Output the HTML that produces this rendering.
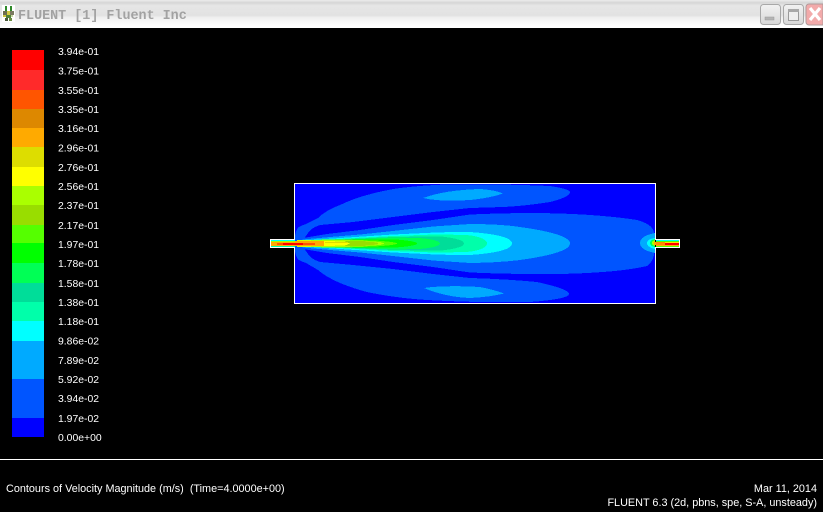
<!DOCTYPE html>
<html><head><meta charset="utf-8"><title>FLUENT</title>
<style>
html,body{margin:0;padding:0;background:#000;width:823px;height:512px;overflow:hidden}
svg{display:block;position:absolute;left:0;top:0}
text{font-family:"Liberation Sans",sans-serif;fill:#fff}
.l{font-size:10.4px}
.b{font-size:10.85px}
</style></head><body>
<svg width="823" height="512" viewBox="0 0 823 512" xmlns="http://www.w3.org/2000/svg">
<defs>
<linearGradient id="tb" x1="0" y1="0" x2="0" y2="1">
<stop offset="0" stop-color="#ececec"/><stop offset=".1" stop-color="#d6d6d6"/><stop offset=".2" stop-color="#e6e6e6"/><stop offset=".55" stop-color="#e2e2e2"/><stop offset=".62" stop-color="#efefef"/><stop offset=".85" stop-color="#fbfbfb"/><stop offset="1" stop-color="#ffffff"/>
</linearGradient>
<linearGradient id="bt" x1="0" y1="0" x2="0" y2="1"><stop offset="0" stop-color="#f2f2f2"/><stop offset="1" stop-color="#d8d8d8"/></linearGradient>
</defs>
<rect width="823" height="512" fill="#000"/>
<rect width="823" height="28" fill="url(#tb)"/>
<!-- app icon -->
<g shape-rendering="crispEdges">
<rect x="2" y="5" width="13" height="17" fill="#fff"/>
<rect x="5" y="6" width="2" height="5" fill="#2f8a2a"/><rect x="10" y="6" width="2" height="5" fill="#2f8a2a"/>
<rect x="3" y="11" width="4" height="4" fill="#6c6c50"/><rect x="7" y="11" width="3" height="4" fill="#d0c840"/><rect x="10" y="11" width="4" height="4" fill="#7a7a60"/>
<rect x="3" y="15" width="3" height="2" fill="#c8c040"/><rect x="6" y="15" width="5" height="3" fill="#50803a"/><rect x="11" y="15" width="2" height="2" fill="#c8d8a0"/>
<rect x="5" y="18" width="3" height="3" fill="#4a5a3a"/><rect x="9" y="18" width="3" height="3" fill="#6a8a40"/>
</g>
<text x="18" y="19" style="font-family:'Liberation Mono',monospace;font-weight:bold;font-size:13.4px;fill:#a2a2a2">FLUENT [1] Fluent Inc</text>
<!-- window buttons -->
<rect x="760.5" y="4.5" width="20" height="20" rx="3" fill="url(#bt)" stroke="#a8a8a8"/>
<rect x="765" y="17" width="9" height="3" fill="#b4b4b4" stroke="#9a9a9a" stroke-width=".5"/>
<rect x="783.5" y="4.5" width="20" height="20" rx="3" fill="url(#bt)" stroke="#a8a8a8"/>
<rect x="788.5" y="9.5" width="10" height="11" fill="#eee" stroke="#9a9a9a"/><rect x="788" y="9" width="11" height="3" fill="#a8a8a8"/>
<path d="M806 7a3 3 0 0 1 3-3H823V25H809a3 3 0 0 1-3-3z" fill="#f2aaaa" stroke="#b09a9a"/>
<path d="M810 8L820 20M820 8L810 20" stroke="#fff" stroke-width="3.2" fill="none"/>

<!-- legend -->
<g shape-rendering="crispEdges">
<rect x="12" y="50" width="32" height="20" fill="#ff0000"/>
<rect x="12" y="70" width="32" height="20" fill="#ff2a2a"/>
<rect x="12" y="90" width="32" height="19" fill="#ff5500"/>
<rect x="12" y="109" width="32" height="19" fill="#dd8800"/>
<rect x="12" y="128" width="32" height="19" fill="#ffaa00"/>
<rect x="12" y="147" width="32" height="20" fill="#dddd00"/>
<rect x="12" y="167" width="32" height="19" fill="#ffff00"/>
<rect x="12" y="186" width="32" height="19" fill="#aaff00"/>
<rect x="12" y="205" width="32" height="20" fill="#99dd00"/>
<rect x="12" y="225" width="32" height="18" fill="#55ff00"/>
<rect x="12" y="243" width="32" height="20" fill="#00ff00"/>
<rect x="12" y="263" width="32" height="20" fill="#00ff55"/>
<rect x="12" y="283" width="32" height="19" fill="#00dd99"/>
<rect x="12" y="302" width="32" height="19" fill="#00ffaa"/>
<rect x="12" y="321" width="32" height="20" fill="#00ffff"/>
<rect x="12" y="341" width="32" height="38" fill="#00aaff"/>
<rect x="12" y="379" width="32" height="39" fill="#0055ff"/>
<rect x="12" y="418" width="32" height="19" fill="#0000ff"/>
</g>
<g>
<text class="l" x="58" y="55">3.94e-01</text>
<text class="l" x="58" y="74.500">3.75e-01</text>
<text class="l" x="58" y="94">3.55e-01</text>
<text class="l" x="58" y="113">3.35e-01</text>
<text class="l" x="58" y="132">3.16e-01</text>
<text class="l" x="58" y="151.500">2.96e-01</text>
<text class="l" x="58" y="171">2.76e-01</text>
<text class="l" x="58" y="190">2.56e-01</text>
<text class="l" x="58" y="209">2.37e-01</text>
<text class="l" x="58" y="229">2.17e-01</text>
<text class="l" x="58" y="248">1.97e-01</text>
<text class="l" x="58" y="267">1.78e-01</text>
<text class="l" x="58" y="287">1.58e-01</text>
<text class="l" x="58" y="306">1.38e-01</text>
<text class="l" x="58" y="325">1.18e-01</text>
<text class="l" x="58" y="344.500">9.86e-02</text>
<text class="l" x="58" y="364">7.89e-02</text>
<text class="l" x="58" y="383">5.92e-02</text>
<text class="l" x="58" y="402">3.94e-02</text>
<text class="l" x="58" y="422">1.97e-02</text>
<text class="l" x="58" y="441">0.00e+00</text>
</g>

<!-- domain -->
<g shape-rendering="crispEdges">
<rect x="295" y="184" width="360" height="119" fill="#0000ff"/>
<!-- top lobe -->
<path d="M295 243V236Q296 229 299 227Q303 225 306 224L318 218Q326 210 340 205Q355 198 367 195Q385 190 400 188Q425 185 447 184.500Q500 183.800 550 186Q570 189 570 192Q570 197 550 202Q525 206 503 207L470 208L433 212L393 217L353 222L320 225Q311 228 308 233Q304 239 300 243Z" fill="#0055ff"/>
<!-- bottom lobe -->
<path d="M295 243V251Q296 258 299 260Q303 262 306 263L318 270Q326 277 340 283Q355 289 367 292Q395 298 427 300Q480 303 530 302Q569 299 569 294Q569 289 537 282Q505 279 470 278L433 274L393 269L353 265L320 262Q311 259 308 254Q304 248 300 243Z" fill="#0055ff"/>
<!-- central 0055ff -->
<path d="M295 243L303 238L327 234L360 230L393 225L433 220L470 214.500Q505 213 537 213Q575 213.500 603 216Q625 218 637 220Q652 224 654 232L655 243L654 255Q652 263 647 266Q630 270 603 272Q570 274.500 537 274Q505 274 470 272.500L433 267L393 262L360 257L327 253L303 249Z" fill="#0055ff"/>
<!-- 00aaff -->
<path d="M423 198Q445 190 480 189Q495 190 503 193.500Q490 198 470 200Q440 202 423 198Z" fill="#00aaff"/>
<path d="M424 288Q445 285 480 287Q495 290 504 293.500Q490 297 470 298Q445 297 424 288Z" fill="#00aaff"/>
<path d="M296 243L303 239.500L330 237L360 234.500L393 231L433 226.500L470 224Q500 224 520 227Q570 234 570 243.500Q570 253 520 260Q495 263 470 263L433 260.500L393 256L360 252.500L330 250L303 247.500Z" fill="#00aaff"/>
<!-- 00ffff -->
<path d="M296 243L310 240L360 236.700L393 234.500L440 232.300L470 232Q512 235 512 243.500Q512 252 470 255L440 254.700L393 252.500L360 250.300L310 247Z" fill="#00ffff"/>
<!-- 00ffaa -->
<path d="M297 243L315 240.500L360 237.700L393 236L440 234.300L470 235.300Q487 238 487 243.500Q487 249 470 251.700L440 252.700L393 251L360 249.300L315 246.500Z" fill="#00ffaa"/>
<!-- 00dd99 -->
<path d="M297 243L320 240.500L360 238.500L393 237L440 236.300Q464 239 464 243.500Q464 248 440 250.700L393 250L360 248.500L320 246.500Z" fill="#00dd99"/>
<!-- 00ff55 -->
<path d="M297 243L320 240.500L360 239L393 237.500L420 238Q440 240 440 243.500Q440 247 420 249L393 249.500L360 248L320 246.500Z" fill="#00ff55"/>
<!-- 00ff00 -->
<path d="M297 243L325 240.500L360 239.500L393 239.300Q417 241 417 243.500Q417 246 393 247.700L360 247.500L325 246.500Z" fill="#00ff00"/>
<!-- 55ff00 -->
<path d="M297 240L345 239.500L375 240.500Q397 242 397 243.500Q397 245 375 246.500L345 247.500L297 247Z" fill="#55ff00"/>
<!-- aaff00 -->
<path d="M297 240L340 240L360 240.500L380 242L385 243.500L380 245L360 246.500L340 247L297 247Z" fill="#aaff00"/>
<!-- 99dd00 -->
<path d="M345 241L363 241L377 242.500L378 243.500L377 244.500L363 246L345 246Z" fill="#99dd00"/>
<!-- ffff00 -->
<path d="M297 240.500L325 241L345 241.500L350 243.500L345 245.500L325 246L297 246.500Z" fill="#ffff00"/>
<!-- dddd00 spot -->
<rect x="325" y="242" width="22" height="1" fill="#dddd00"/>
<!-- outlet blob -->
<path d="M655 233Q640 236 640 243Q640 250 655 253Z" fill="#00aaff"/>
<path d="M655 238Q647 239 647 243Q647 247 655 249Z" fill="#00ffff"/>
<path d="M655 239Q650 240 650 243Q650 246 655 247Z" fill="#00ff55"/>
<path d="M655 240Q652 241 652 243Q652 245 655 246Z" fill="#aaff00"/>
<rect x="654" y="242" width="2" height="3" fill="#ffaa00"/>

<!-- inlet -->
<rect x="271" y="240" width="24" height="1" fill="#00ffff"/>
<rect x="271" y="241" width="24" height="1" fill="#aaff00"/>
<rect x="271" y="242" width="24" height="4" fill="#ffaa00"/>
<rect x="271" y="246" width="24" height="1" fill="#00ffaa"/>
<rect x="295" y="241" width="29" height="5" fill="#ffaa00"/>
<rect x="277" y="243" width="38" height="2" fill="#ff5500"/>
<rect x="283" y="243" width="20" height="2" fill="#ff0000"/>
<!-- outlet pipe -->
<rect x="656" y="240" width="23" height="1" fill="#00ffff"/>
<rect x="656" y="241" width="23" height="1" fill="#55ff00"/>
<rect x="656" y="242" width="23" height="1" fill="#ffdd00"/>
<rect x="656" y="243" width="23" height="2" fill="#ff0000"/>
<rect x="656" y="245" width="23" height="1" fill="#ffaa00"/>
<rect x="656" y="246" width="23" height="1" fill="#55ff00"/>
<rect x="656" y="242" width="9" height="3" fill="#ff8800"/>
<!-- boundaries -->
<rect x="294" y="183" width="362" height="1" fill="#fff"/>
<rect x="294" y="303" width="362" height="1" fill="#fff"/>
<rect x="294" y="183" width="1" height="56" fill="#fff"/>
<rect x="294" y="247" width="1" height="57" fill="#fff"/>
<rect x="655" y="183" width="1" height="56" fill="#fff"/>
<rect x="655" y="247" width="1" height="57" fill="#fff"/>
<rect x="270" y="239" width="25" height="1" fill="#fff"/>
<rect x="270" y="247" width="25" height="1" fill="#fff"/>
<rect x="270" y="239" width="1" height="9" fill="#fff"/>
<rect x="655" y="239" width="25" height="1" fill="#fff"/>
<rect x="655" y="247" width="25" height="1" fill="#fff"/>
<rect x="679" y="239" width="1" height="9" fill="#fff"/>
<!-- footer rule -->
<rect x="0" y="459" width="823" height="1" fill="#fff"/>
</g>
<text class="b" x="6" y="492">Contours of Velocity Magnitude (m/s)&#160; (Time=4.0000e+00)</text>
<text class="b" x="817" y="492" text-anchor="end">Mar 11, 2014</text>
<text class="b" x="817" y="506" text-anchor="end">FLUENT 6.3 (2d, pbns, spe, S-A, unsteady)</text>
</svg>
</body></html>
